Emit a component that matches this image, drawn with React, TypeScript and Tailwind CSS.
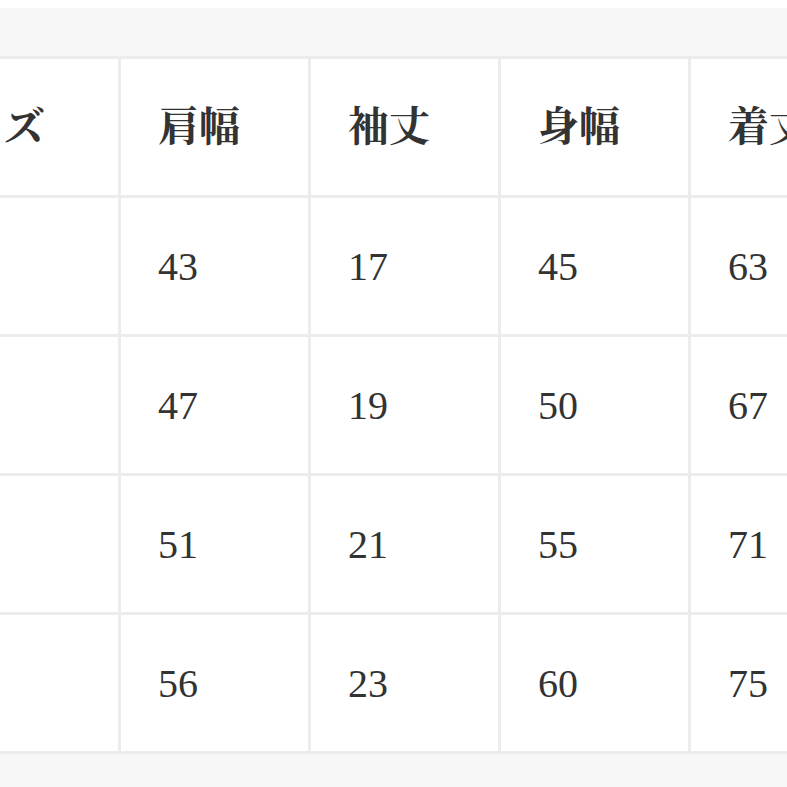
import React from "react";

const headers = ["サイズ", "肩幅", "袖丈", "身幅", "着丈"];
const rows = [
  ["S", "43", "17", "45", "63"],
  ["M", "47", "19", "50", "67"],
  ["L", "51", "21", "55", "71"],
  ["XL", "56", "23", "60", "75"],
];

export default function App() {
  return (
    <div className="w-[787px] h-[787px] overflow-hidden bg-white pt-[8px] text-[#333333]">
      <div className="h-[48px] bg-[#f7f7f7]" />
      <div className="ml-[-112px] w-[1000px] bg-[#ececec] py-[3px] grid grid-cols-[230px_187px_187px_187px_187px] auto-rows-[136px] gap-[3px]">
        {headers.map((h) => (
          <div
            key={h}
            className="bg-white flex items-center pl-[37px] pb-[8px] text-[41px] font-bold leading-none"
            style={{ fontFamily: '"Noto Serif CJK JP", "Noto Sans CJK JP", serif' }}
          >
            {h}
          </div>
        ))}
        {rows.map((r) =>
          r.map((c, j) => (
            <div
              key={r[0] + j}
              className="bg-white flex items-center pl-[37px] pt-[2px] text-[40px] leading-none"
              style={{ fontFamily: '"Liberation Serif", "Times New Roman", serif' }}
            >
              {j === 0 ? "" : c}
            </div>
          ))
        )}
      </div>
      <div className="h-[40px] bg-[#f7f7f7]" />
    </div>
  );
}
